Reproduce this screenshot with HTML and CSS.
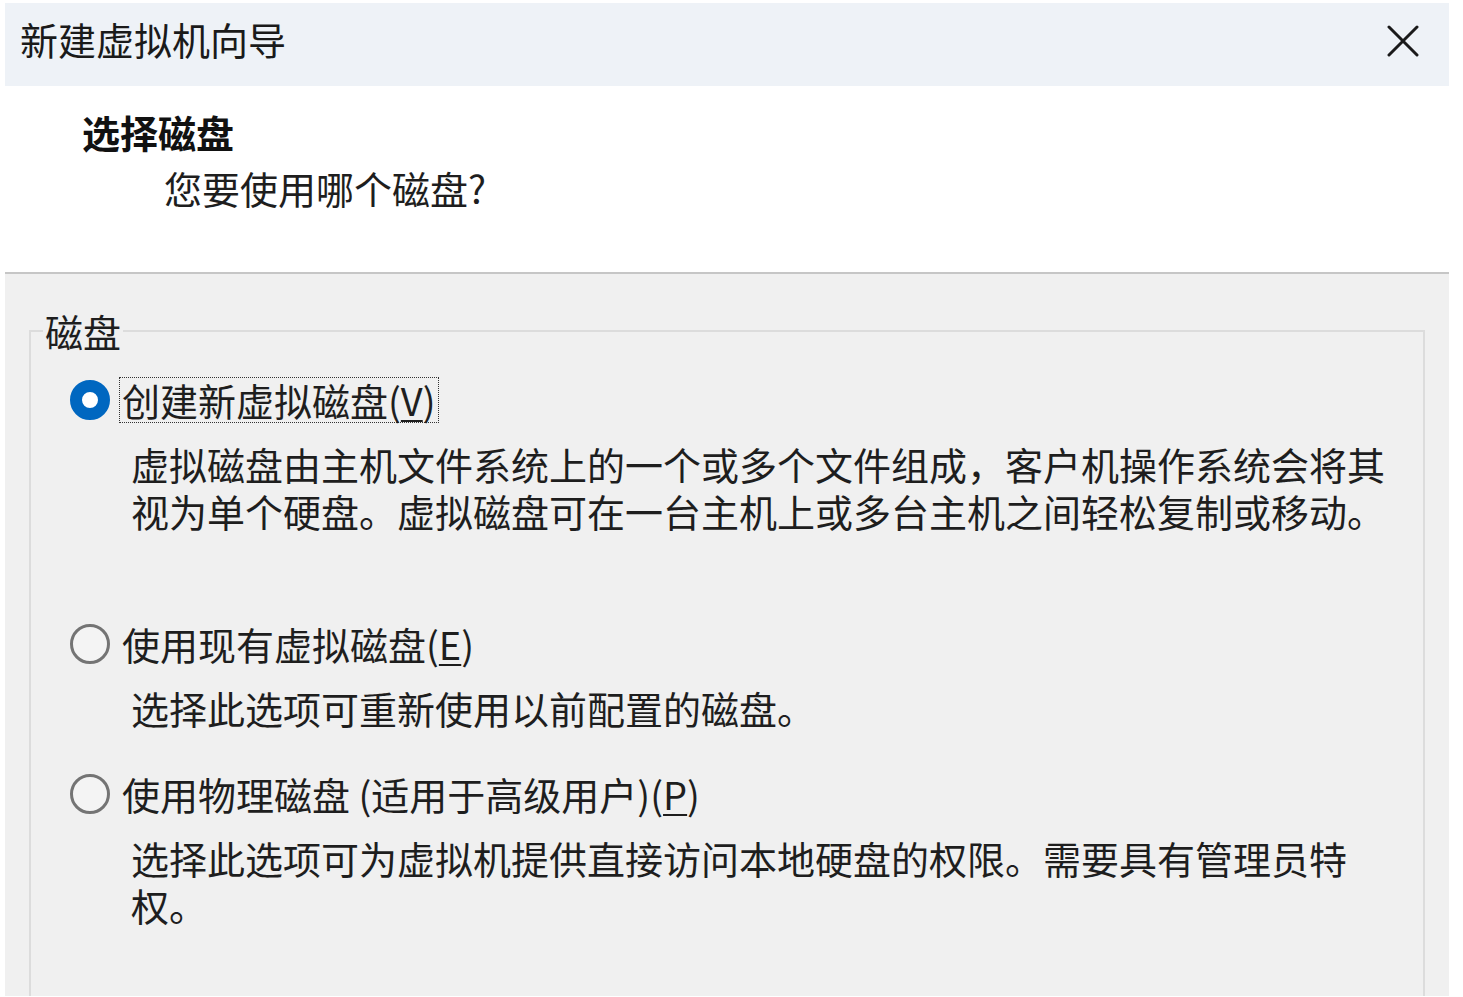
FILE: index.html
```html
<!DOCTYPE html>
<html lang="zh-CN">
<head>
  <meta charset="UTF-8">
  <title>新建虚拟机向导</title>
  <link rel="stylesheet" href="styles.css">
</head>
<body>
  <div class="dialog">
    <div class="titlebar">
      <span class="title">新建虚拟机向导</span>
      <svg class="close" width="32" height="32" viewBox="0 0 32 32">
        <path d="M2 2 L30 30 M30 2 L2 30" stroke="#1a1a1a" stroke-width="3" fill="none" stroke-linecap="round"/>
      </svg>
    </div>
    <div class="header">
      <div class="heading">选择磁盘</div>
      <div class="subheading">您要使用哪个磁盘?</div>
    </div>
    <div class="content">
      <fieldset class="group">
        <legend>磁盘</legend>
        <div class="option">
          <label class="row">
            <input type="radio" name="disk" value="new" checked>
            <span class="label focused">创建新虚拟磁盘(<u>V</u>)</span>
          </label>
          <div class="desc tall">虚拟磁盘由主机文件系统上的一个或多个文件组成，客户机操作系统会将其视为单个硬盘。虚拟磁盘可在一台主机上或多台主机之间轻松复制或移动。</div>
        </div>
        <div class="option">
          <label class="row">
            <input type="radio" name="disk" value="existing">
            <span class="label">使用现有虚拟磁盘(<u>E</u>)</span>
          </label>
          <div class="desc">选择此选项可重新使用以前配置的磁盘。</div>
        </div>
        <div class="option">
          <label class="row">
            <input type="radio" name="disk" value="physical">
            <span class="label">使用物理磁盘 (适用于高级用户)(<u>P</u>)</span>
          </label>
          <div class="desc">选择此选项可为虚拟机提供直接访问本地硬盘的权限。需要具有管理员特权。</div>
        </div>
      </fieldset>
    </div>
  </div>
</body>
</html>
```

FILE: styles.css
```css
body { margin: 0; background: #fff; font-family: "Noto Sans CJK SC", "Noto Sans", sans-serif; color: #1e1e1e; overflow: hidden; }
.dialog { width: 1444px; height: 993px; margin: 3px 0 0 5px; display: flex; flex-direction: column; overflow: hidden; }
.titlebar { height: 83px; flex: none; background: #eef2f7; display: flex; align-items: center; justify-content: space-between; padding: 0 30px 8px 15px; box-sizing: border-box; }
.title { font-size: 38px; line-height: 48px; color: #1a1a1a; margin-top: -3px; }
.header { height: 188px; flex: none; box-sizing: border-box; background: #fff; border-bottom: 2px solid #c6c6c6; padding: 22px 0 0 77px; }
.heading { font-size: 38px; line-height: 48px; font-weight: bold; color: #111; }
.subheading { font-size: 38px; line-height: 48px; margin: 8px 0 0 82px; }
.content { flex: 1; background: #f0f0f0; padding: 33px 24px 0 24px; }
.group { margin: 0; padding: 0; min-height: 760px; border: 2px solid #dcdcdc; }
.group legend { margin-left: 12px; padding: 0 2px; font-size: 38px; line-height: 48px; }
.option { margin-bottom: 40px; padding-left: 39px; }
.option:first-of-type { margin-top: 22px; }
.row { display: flex; align-items: center; gap: 9px; height: 46px; cursor: default; }
.row input { appearance: none; margin: 0; width: 40px; height: 40px; box-sizing: border-box; border-radius: 50%; border: 3px solid #747474; background: #f4f4f4; flex: none; }
.row input:checked { border: 12px solid #0067c0; background: #fff; }
.label { font-size: 38px; line-height: 44px; padding: 0 2px; border: 1px dotted transparent; }
.label.focused { border-color: #333; }
.label u { text-underline-offset: 4px; text-decoration-thickness: 2px; }
.desc { margin: 17px 0 0 61px; width: 1270px; font-size: 38px; line-height: 47px; }
.desc.tall { min-height: 141px; }
```
